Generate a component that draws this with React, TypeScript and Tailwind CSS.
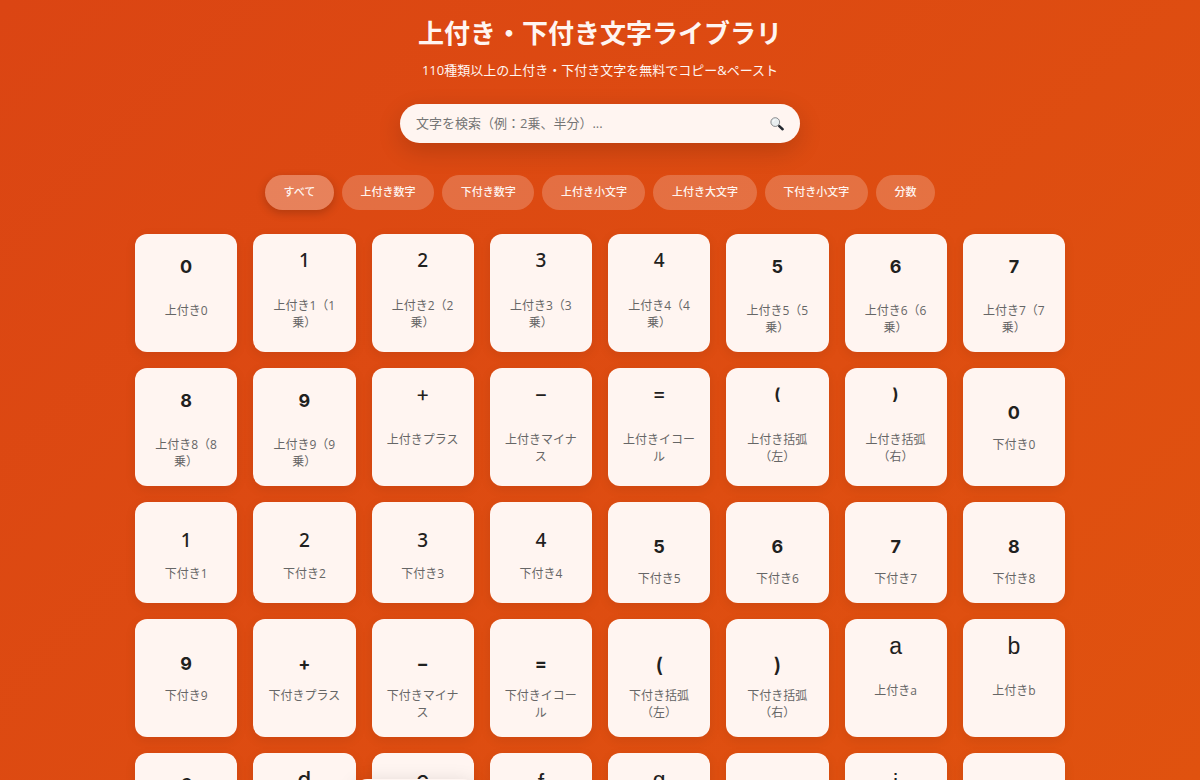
import { useState } from 'react';

type Kind =
  | 'supWide'
  | 'sup'
  | 'supMath'
  | 'supParen'
  | 'subWide'
  | 'sub'
  | 'subParen'
  | 'letter'
  | 'letterBold'
  | 'letterLow'
  | 'letterHidden';

const kinds: Record<Kind, string> = {
  supWide: "h-[52px] pt-[7px] font-['Inter',sans-serif] text-[18px] font-bold",
  sup: "h-[47px] font-['Noto_Sans',sans-serif] text-[19px] font-medium",
  supMath: "h-[47px] font-['Inter',sans-serif] text-[21px] font-normal",
  supParen: "h-[47px] font-['Inter',sans-serif] text-[16px] font-bold",
  subWide: "h-[52px] pt-[19px] font-['Inter',sans-serif] text-[18px] font-bold",
  sub: "h-[47px] pt-3 font-['Noto_Sans',sans-serif] text-[19px] font-medium",
  subParen: "h-[52px] pt-5 font-['Inter',sans-serif] text-[20px] font-semibold",
  letter: "h-[47px] pt-px font-['Liberation_Sans',sans-serif] text-[23px]",
  letterBold: "h-[47px] font-['Inter',sans-serif] text-[22px] font-medium",
  letterLow: "h-[52px] pt-1 font-['Liberation_Sans',sans-serif] text-[23px]",
  letterHidden: "h-[52px] pt-3 font-['Liberation_Sans',sans-serif] text-[23px]"
};

const filters = ["すべて", "上付き数字", "下付き数字", "上付き小文字", "上付き大文字", "下付き小文字", "分数"];

const characters: { symbol: string; label: string; kind: Kind }[] = [
  { symbol: "0", label: "上付き0", kind: "supWide" },
  { symbol: "1", label: "上付き1（1乗）", kind: "sup" },
  { symbol: "2", label: "上付き2（2乗）", kind: "sup" },
  { symbol: "3", label: "上付き3（3乗）", kind: "sup" },
  { symbol: "4", label: "上付き4（4乗）", kind: "sup" },
  { symbol: "5", label: "上付き5（5乗）", kind: "supWide" },
  { symbol: "6", label: "上付き6（6乗）", kind: "supWide" },
  { symbol: "7", label: "上付き7（7乗）", kind: "supWide" },
  { symbol: "8", label: "上付き8（8乗）", kind: "supWide" },
  { symbol: "9", label: "上付き9（9乗）", kind: "supWide" },
  { symbol: "+", label: "上付きプラス", kind: "supMath" },
  { symbol: "−", label: "上付きマイナス", kind: "supMath" },
  { symbol: "=", label: "上付きイコール", kind: "supMath" },
  { symbol: "(", label: "上付き括弧（左）", kind: "supParen" },
  { symbol: ")", label: "上付き括弧（右）", kind: "supParen" },
  { symbol: "0", label: "下付き0", kind: "subWide" },
  { symbol: "1", label: "下付き1", kind: "sub" },
  { symbol: "2", label: "下付き2", kind: "sub" },
  { symbol: "3", label: "下付き3", kind: "sub" },
  { symbol: "4", label: "下付き4", kind: "sub" },
  { symbol: "5", label: "下付き5", kind: "subWide" },
  { symbol: "6", label: "下付き6", kind: "subWide" },
  { symbol: "7", label: "下付き7", kind: "subWide" },
  { symbol: "8", label: "下付き8", kind: "subWide" },
  { symbol: "9", label: "下付き9", kind: "subWide" },
  { symbol: "+", label: "下付きプラス", kind: "subWide" },
  { symbol: "−", label: "下付きマイナス", kind: "subWide" },
  { symbol: "=", label: "下付きイコール", kind: "subWide" },
  { symbol: "(", label: "下付き括弧（左）", kind: "subParen" },
  { symbol: ")", label: "下付き括弧（右）", kind: "subParen" },
  { symbol: "a", label: "上付きa", kind: "letter" },
  { symbol: "b", label: "上付きb", kind: "letter" },
  { symbol: "c", label: "上付きc", kind: "letterLow" },
  { symbol: "d", label: "上付きd", kind: "letterBold" },
  { symbol: "e", label: "上付きe", kind: "letterBold" },
  { symbol: "f", label: "上付きf", kind: "letterLow" },
  { symbol: "g", label: "上付きg", kind: "letter" },
  { symbol: "h", label: "上付きh", kind: "letterHidden" },
  { symbol: "i", label: "上付きi", kind: "letterLow" },
  { symbol: "j", label: "上付きj", kind: "letterHidden" }
];

function SearchIcon() {
  return (
    <svg viewBox="0 0 16 16" className="size-3.5" aria-hidden="true">
      <path d="M9 9l1.6 1.6" stroke="#777" strokeWidth="1.4" />
      <path d="M10.6 10.4l3.8 3.6" stroke="#222830" strokeWidth="2.8" strokeLinecap="round" />
      <circle cx="6" cy="5.8" r="5" fill="#e9eef0" stroke="#6b6f73" strokeWidth="0.9" />
      <path d="M3.2 5.4a2.8 2.8 0 0 1 2.4-2.3" stroke="#fff" strokeWidth="1" fill="none" strokeLinecap="round" />
    </svg>
  );
}

export default function App() {
  const [query, setQuery] = useState("");
  const [active, setActive] = useState("すべて");

  return (
    <div className="relative h-screen overflow-hidden bg-linear-135 from-[#db4513] to-[#e0520f] font-['Open_Sans','Noto_Sans_CJK_JP',sans-serif]">
      <div className="mx-auto max-w-[962px] px-4 pt-4">
        <header className="text-center text-[#fff5f1]">
          <h1 className="text-[26px] leading-[34px] font-bold">上付き・下付き文字ライブラリ</h1>
          <p className="mt-2.5 text-[13px] leading-5">110種類以上の上付き・下付き文字を無料でコピー&amp;ペースト</p>
        </header>

        <form
          className="mx-auto mt-6 flex h-[39px] max-w-[400px] items-center rounded-full bg-[#fff5f1] px-4 shadow-[0_8px_24px_rgba(0,0,0,0.16)]"
          onSubmit={(e) => e.preventDefault()}
        >
          <input
            type="text"
            aria-label="文字を検索"
            placeholder="文字を検索（例：2乗、半分）..."
            value={query}
            onChange={(e) => setQuery(e.target.value)}
            className="min-w-0 flex-1 bg-transparent text-[13px] text-[#333] outline-none placeholder:text-[#757575]"
          />
          <button type="submit" aria-label="検索" className="cursor-pointer">
            <SearchIcon />
          </button>
        </form>

        <div className="mx-auto mt-8 flex max-w-[670px] flex-wrap justify-center gap-2">
          {filters.map((filter) => (
            <button
              key={filter}
              type="button"
              onClick={() => setActive(filter)}
              className={`h-[35px] grow cursor-pointer rounded-full px-[18px] text-[11px] font-medium text-[#fff5f1] ${
                filter === active ? "bg-[#fff5f1]/33 shadow-[0_3px_10px_rgba(0,0,0,0.2)]" : "bg-[#fff5f1]/22"
              }`}
            >
              {filter}
            </button>
          ))}
        </div>

        <main className="mt-6 grid grid-cols-[repeat(auto-fill,minmax(100px,1fr))] gap-4">
          {characters
            .filter((item) => item.label.includes(query))
            .map((item) => (
              <button
                key={item.label}
                type="button"
                className="flex cursor-pointer flex-col items-center justify-start rounded-xl bg-[#fff5f1] px-[14px] py-4 text-center shadow-[0_3px_12px_rgba(0,0,0,0.08)]"
              >
                <span className={`block leading-5! text-[#1f2120] ${kinds[item.kind]}`}>{item.symbol}</span>
                <span className="block text-[12px] leading-[17px] text-[#666]">{item.label}</span>
              </button>
            ))}
        </main>
      </div>

      {/* Copy toast, parked just under the fold */}
      <div className="absolute -bottom-10 left-[355px] h-[41px] w-[120px] rounded-xl bg-[#fff5f1] shadow-[0_4px_20px_rgba(0,0,0,0.15)]" />
    </div>
  );
}
